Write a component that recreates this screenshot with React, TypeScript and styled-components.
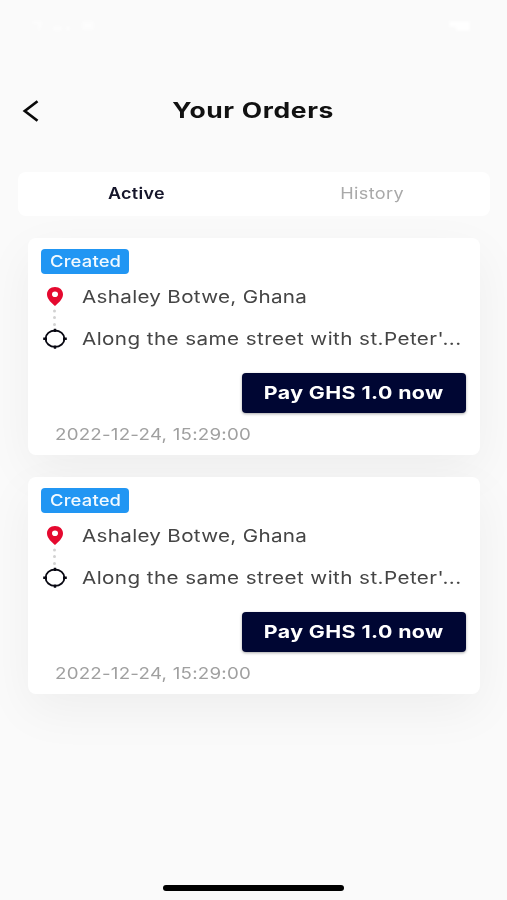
import React from "react";
import styled, { createGlobalStyle } from "styled-components";

const Global = createGlobalStyle`
  * { box-sizing: border-box; }
  body { margin: 0; background: #fafafa; font-family: Inter, "Liberation Sans", sans-serif; }
`;

const Screen = styled.div`
  height: 900px;
  overflow: hidden;
  display: flex;
  flex-direction: column;
  background: #fafafa;
`;

const StatusBar = styled.div`
  height: 50px;
  padding: 18px 29px 0;
  display: flex;
  justify-content: space-between;
  filter: blur(1.5px);
`;

/* The typeface is drawn wider than its natural proportions. */
const Wide = styled.span<{ $x: number; $gap: number; $origin?: string }>`
  display: inline-block;
  white-space: nowrap;
  letter-spacing: ${(p) => p.$gap}px;
  transform: scaleX(${(p) => p.$x});
  transform-origin: ${(p) => p.$origin ?? "left"} center;
`;

const Header = styled.header`
  height: 122px;
  padding: 0 20px 1px;
  display: grid;
  grid-template-columns: 24px 1fr 24px;
  align-items: center;
`;

const BackButton = styled.button`
  border: 0;
  padding: 0;
  background: none;
  height: 24px;
`;

const Title = styled.h1`
  margin: 0;
  padding-top: 1px;
  font-size: 21px;
  line-height: 28px;
  font-weight: 650;
  color: #111;
  text-align: center;
`;

const Tabs = styled.nav`
  height: 44px;
  margin: 0 17px 0 18px;
  border-radius: 8px;
  background: #fff;
  display: grid;
  grid-template-columns: 1fr 1fr;
`;

const Tab = styled.button<{ $active?: boolean }>`
  border: 0;
  padding: 0 0 2px;
  background: none;
  font: ${(p) => (p.$active ? 600 : 400)} 16px/20px Inter, sans-serif;
  color: ${(p) => (p.$active ? "#15152a" : "#a9a9a9")};
`;

const OrderList = styled.main`
  flex: 1;
  padding: 22px 27px 0 28px;
  display: flex;
  flex-direction: column;
  gap: 22px;
`;

const Card = styled.article`
  height: 217px;
  padding: 11px 14px 0 13px;
  border-radius: 8px;
  background: #fff;
  box-shadow: 0 16px 50px rgba(0, 0, 0, 0.05);
  display: flex;
  flex-direction: column;
`;

const Badge = styled.div`
  width: 88px;
  height: 25px;
  border-radius: 4px;
  background: #2196f3;
  color: #f2faff;
  font-size: 16px;
  font-weight: 450;
  line-height: 24px;
  padding-left: 8.5px;
`;

const Route = styled.div`
  height: 86px;
  display: grid;
  grid-template-columns: 28px 1fr;
  column-gap: 13px;
`;

const Places = styled.div`
  color: #454545;
  font-size: 17.5px;
  font-weight: 430;
  line-height: 42px;
  display: flex;
  flex-direction: column;
  padding-top: 1.5px;
`;

const PayButton = styled.button`
  align-self: flex-end;
  width: 224px;
  height: 40px;
  margin-top: 13px;
  border: 0;
  border-radius: 4px;
  background: #000633;
  color: #fff;
  font: 700 17.5px/40px Inter, sans-serif;
  padding: 0;
  box-shadow: 0 1px 3px rgba(0, 0, 0, 0.35);
`;

const Timestamp = styled.time`
  margin: 10px 0 0 14px;
  color: #a0a0a0;
  font-size: 16px;
  line-height: 22px;
`;

const HomeIndicator = styled.div`
  width: 181px;
  height: 6px;
  margin: 0 auto 9px;
  border-radius: 3px;
  background: #000;
`;

const RouteIcon = () => (
  <svg width="28" height="86" viewBox="0 0 28 86">
    <path
      fillRule="evenodd"
      fill="#e5092f"
      d="M14 13C9.3 13 6 16.2 6 20.4C6 25.2 11.2 29.4 14 32C16.8 29.4 22 25.2 22 20.4C22 16.2 18.7 13 14 13ZM14 17.5A3 2.8 0 1 1 14 23.1A3 2.8 0 1 1 14 17.5Z"
    />
    <g fill="#d2d2d2">
      <circle cx="13.5" cy="37" r="1.5" />
      <circle cx="13.5" cy="43.5" r="1.5" />
      <circle cx="13.5" cy="50.5" r="1.5" />
    </g>
    <g fill="none" stroke="#080812" strokeWidth="1.9">
      <ellipse cx="14" cy="64.7" rx="9.4" ry="8.2" />
      <path d="M14 54.7V58M14 71.4V74.7M2.2 64.7H6M22 64.7H25.8" strokeWidth="2.4" />
    </g>
  </svg>
);

const orders = [1, 2].map((id) => ({
  id,
  status: "Created",
  from: "Ashaley Botwe, Ghana",
  to: "Along the same street with st.Peter'...",
  action: "Pay GHS 1.0 now",
  time: "2022-12-24, 15:29:00",
}));

export default function App() {
  return (
    <>
      <Global />
      <Screen>
        <StatusBar>
          <svg width="70" height="16" fill="#fff" opacity="0.5">
            <path d="M3 3H14L11 13H9V6H3ZM24 8H33V13H24ZM37 8H41V13H37ZM53 3H65V12H53Z" />
          </svg>
          <svg width="30" height="16" fill="#fff" opacity="0.9">
            <path d="M1 3H22V13H8V9H1Z" />
          </svg>
        </StatusBar>
        <Header>
          <BackButton aria-label="Back">
            <svg width="24" height="24" fill="none" stroke="#090909" strokeWidth="2.7">
              <path d="M17.5 2.2L4.8 12L17.5 21.8" />
            </svg>
          </BackButton>
          <Title>
            <Wide $x={1.26} $gap={0.5} $origin="center">Your Orders</Wide>
          </Title>
        </Header>
        <Tabs>
          <Tab $active>
            <Wide $x={1.12} $gap={0.3} $origin="center">Active</Wide>
          </Tab>
          <Tab>
            <Wide $x={1.13} $gap={0.3} $origin="center">History</Wide>
          </Tab>
        </Tabs>
        <OrderList>
          {orders.map((o) => (
            <Card key={o.id}>
              <Badge>
                <Wide $x={1.15} $gap={0.15}>{o.status}</Wide>
              </Badge>
              <Route>
                <RouteIcon />
                <Places>
                  <Wide $x={1.18} $gap={0.25}>{o.from}</Wide>
                  <Wide $x={1.18} $gap={0.35}>{o.to}</Wide>
                </Places>
              </Route>
              <PayButton>
                <Wide $x={1.22} $gap={0.32} $origin="center">{o.action}</Wide>
              </PayButton>
              <Timestamp>
                <Wide $x={1.17} $gap={0.2}>{o.time}</Wide>
              </Timestamp>
            </Card>
          ))}
        </OrderList>
        <HomeIndicator />
      </Screen>
    </>
  );
}
